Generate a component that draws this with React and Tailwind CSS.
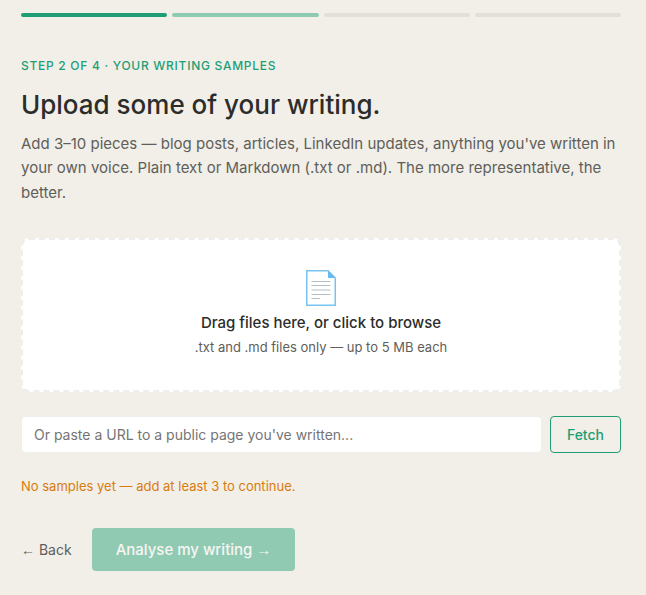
import React, { useState } from 'react';

const steps = [
  { name: 'About you', color: 'bg-[#1d9e75]' },
  { name: 'Your writing samples', color: 'bg-[#8fcab3]' },
  { name: 'Your voice', color: 'bg-[#e2dfd8]' },
  { name: 'Finish', color: 'bg-[#e2dfd8]' },
];

const FileIcon = () => (
  <svg width="30" height="36" viewBox="0 0 30 36" fill="none" aria-hidden="true">
    <path d="M0.75 0.75H22L29.25 8V35.25H0.75Z" fill="#fff" stroke="#78c3f0" strokeWidth="1.5" />
    <path d="M22 0.5L29.5 8H22Z" fill="#68b9ee" />
    <path
      d="M5.5 11.5H24.5M5.5 15.5H24.5M5.5 20H24.5M5.5 24.5H24.5M5.5 28.5H14"
      stroke="#b4bfc6"
      strokeWidth="1.2"
    />
  </svg>
);

const App = () => {
  const [url, setUrl] = useState('');
  const [samples, setSamples] = useState([]);

  return (
    <div className="min-h-screen bg-[#f1efe8] pt-[13px] pr-[25px] pb-6 pl-[21px] font-['Inter',sans-serif] text-[#2c2c2a]">
      <div className="flex gap-[5px]">
        {steps.map((step) => (
          <div key={step.name} className={`h-1 flex-1 rounded-sm ${step.color}`}></div>
        ))}
      </div>

      <p className="mt-10 text-xs leading-[18px] font-medium tracking-[0.06em] text-[#1d9e75] uppercase">
        Step 2 of 4 · Your writing samples
      </p>
      <h1 className="mt-3 text-[26px] leading-9 font-medium">Upload some of your writing.</h1>
      <p className="mt-[9px] text-[15px] leading-relaxed text-[#5f5e5a]">
        Add 3–10 pieces — blog posts, articles, LinkedIn updates, anything you've written in your own voice. Plain
        text or Markdown (.txt or .md). The more representative, the better.
      </p>

      <label
        htmlFor="files"
        className="mt-[33px] flex cursor-pointer flex-col items-center rounded-lg border-2 border-dashed border-[#eeeeee] bg-white px-6 pt-[30px] pb-[33px] text-center"
      >
        <FileIcon />
        <span className="mt-[5px] text-[15px] leading-6 font-medium">Drag files here, or click to browse</span>
        <span className="mt-0.5 text-[13px] leading-5 text-[#5f5e5a]">.txt and .md files only — up to 5 MB each</span>
        <input
          id="files"
          type="file"
          accept=".txt,.md"
          multiple
          className="sr-only"
          onChange={(e) => setSamples([...samples, ...e.target.files])}
        />
      </label>

      <div className="mt-6 flex gap-2">
        <input
          type="url"
          aria-label="Page URL"
          value={url}
          onChange={(e) => setUrl(e.target.value)}
          placeholder="Or paste a URL to a public page you've written..."
          className="min-w-0 flex-1 rounded-[4px] border border-[#eeeeee] bg-white px-3 text-sm outline-none placeholder:text-[#757575]"
        />
        <button
          type="button"
          className="rounded-[4px] border border-[#1d9e75] px-4 py-2 text-sm leading-[19px] font-medium text-[#1d9e75]"
        >
          Fetch
        </button>
      </div>

      <p className="mt-[23px] text-[13px] leading-5 text-[#d97c0f]">No samples yet — add at least 3 to continue.</p>

      <div className="mt-8 flex items-center gap-5">
        <button type="button" className="text-sm text-[#5f5e5a]">
          <span className="font-['Liberation_Sans',sans-serif]">←</span> Back
        </button>
        <button
          type="button"
          disabled={samples.length < 3}
          className="rounded-[4px] bg-[#1d9e75] px-6 py-2.5 text-[15px] leading-[23px] font-medium text-white disabled:opacity-45"
        >
          Analyse my writing <span className="font-['Liberation_Sans',sans-serif]">→</span>
        </button>
      </div>
    </div>
  );
};

export default App;
